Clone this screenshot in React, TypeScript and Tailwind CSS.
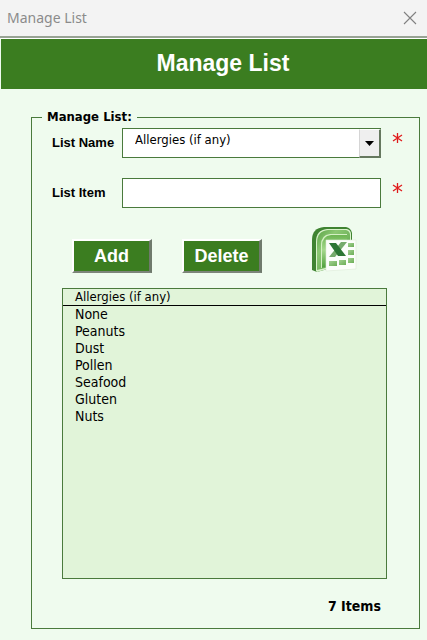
import React, { useState } from 'react';

const listNames = ['Allergies (if any)'];

const listItems = ['None', 'Peanuts', 'Dust', 'Pollen', 'Seafood', 'Gluten', 'Nuts'];

const buttonClass =
  "h-[34px] w-20 border-t-2 border-l-2 border-r-[3px] border-b-2 border-t-white border-l-white border-r-[#6f7a6c] border-b-[#7c8479] bg-[#3b7d20] font-['Liberation_Sans',sans-serif] text-[18px] leading-none font-bold text-white";

function ExcelIcon() {
  return (
    <svg viewBox="0 0 46 46" className="h-[46px] w-[46px]" aria-hidden="true">
      <defs>
        <linearGradient id="rim" x1="0" y1="0" x2="1" y2="1">
          <stop offset="0" stopColor="#5da548" />
          <stop offset="0.3" stopColor="#8cc873" />
          <stop offset="1" stopColor="#4b983a" />
        </linearGradient>
        <linearGradient id="inside" x1="0" y1="0" x2="0" y2="1">
          <stop offset="0" stopColor="#6db553" />
          <stop offset="0.45" stopColor="#a5d88c" />
          <stop offset="1" stopColor="#4e9f3a" />
        </linearGradient>
        <linearGradient id="cell" x1="0" y1="0" x2="1" y2="1">
          <stop offset="0" stopColor="#a3d192" />
          <stop offset="1" stopColor="#6cae56" />
        </linearGradient>
      </defs>
      <path d="M0 43V13Q0 1 12 0H34Q39 1 40 6V35L5 45Z" fill="#3f8331" />
      <path d="M4 44V15Q4 3 15 2H35Q39 3 39 7V35L5 45Z" fill="#d9f2cb" />
      <path d="M5 43V16Q5 4 16 3H34Q38 4 38 8V35Z" fill="url(#rim)" />
      <path d="M9 41V18Q9 8 18 7H35V34Z" fill="#d4f0c4" />
      <path d="M10 41V19Q10 9 19 8H35V34Z" fill="url(#inside)" />
      <path d="M14 13L44 13V42L14 44Z" fill="#fcfefb" stroke="#dcebd6" strokeWidth="0.6" />
      <path d="M29 15H35L23 30H17Z" fill="#76ab6d" />
      <path d="M17 16H24L34 29H26Z" fill="#2c7634" />
      <g fill="url(#cell)">
        <path d="M36 16H42V20H36Z" />
        <path d="M36 23H42V28H36Z" />
        <path d="M36 31H42V36H36Z" />
        <path d="M27 33H34V38H27Z" />
        <path d="M17 34H25V39H17Z" />
      </g>
    </svg>
  );
}

function Required() {
  return (
    <svg viewBox="0 0 11 12" className="mt-1 ml-[11px] h-3 w-[11px] self-start" role="img" aria-label="required">
      <path d="M5.5 1V11M1 3L10 9M10 3L1 9" stroke="#e01b1b" strokeWidth="1.3" fill="none" />
    </svg>
  );
}

export default function App() {
  const [listName, setListName] = useState(listNames[0]);
  const [listItem, setListItem] = useState('');

  return (
    <div className="flex min-h-screen flex-col border-b border-[#9aa398] bg-[#effbee] font-['DejaVu_Sans_Condensed','DejaVu_Sans',sans-serif] text-black">
      {/* Title bar */}
      <div className="flex h-[38px] items-center justify-between border-b-2 border-[#98a394] bg-[#f3f3f3] pr-[10px] pl-[7px]">
        <span className="font-['Noto_Sans',sans-serif] text-sm text-[#8b8b8b]">Manage List</span>
        <button type="button" aria-label="Close" className="flex h-6 w-3.5 items-center justify-center">
          <svg viewBox="0 0 14 14" className="h-3.5 w-3.5">
            <path d="M1 1L13 13M13 1L1 13" stroke="#808080" strokeWidth="1.1" />
          </svg>
        </button>
      </div>

      {/* Heading */}
      <header className="ml-px flex h-[51px] items-center justify-center border-t border-white bg-[#3b7d20] pb-0.5 pl-[18px]">
        <h1 className="font-['Liberation_Sans',sans-serif] text-[23px] font-bold text-white">Manage List</h1>
      </header>

      <main className="px-[7px] pt-[19px] pb-[11px] pl-[31px]">
        <fieldset className="min-w-0 border border-[#4a7a3c] pr-4 pl-5">
          <legend className="-ml-[10px] px-[5px] text-[13px] leading-[18px] font-bold">Manage List:</legend>

          <div className="mt-0.5 flex items-center">
            <label htmlFor="list-name" className="w-[70px] font-['Liberation_Sans',sans-serif] text-[13px] font-bold">
              List Name
            </label>
            <div className="relative flex-1">
              <select
                id="list-name"
                value={listName}
                onChange={(e) => setListName(e.target.value)}
                className="block h-[30px] w-full appearance-none rounded-none border border-[#4a7a3c] bg-white pb-1.5 pl-3 text-[13px] leading-5"
              >
                {listNames.map((name) => (
                  <option key={name}>{name}</option>
                ))}
              </select>
              <span className="pointer-events-none absolute top-px right-0 bottom-0 flex w-[22px] items-center justify-center border-t border-r-2 border-b-2 border-l border-t-white border-r-[#66785f] border-b-[#66785f] border-l-[#d5d5d5] bg-[#efefef]">
                <svg viewBox="0 0 9 5" className="h-[5px] w-[9px]">
                  <path d="M0 0H9L4.5 5Z" fill="#000" />
                </svg>
              </span>
            </div>
            <Required />
          </div>

          <div className="mt-5 flex items-center">
            <label htmlFor="list-item" className="w-[70px] font-['Liberation_Sans',sans-serif] text-[13px] font-bold">
              List Item
            </label>
            <input
              id="list-item"
              type="text"
              value={listItem}
              onChange={(e) => setListItem(e.target.value)}
              className="h-[30px] min-w-0 flex-1 border border-[#4a7a3c] bg-white px-3 text-[13px]"
            />
            <Required />
          </div>

          {/* Actions */}
          <div className="mt-[19px] flex items-end pl-5">
            <button type="button" className={buttonClass}>
              Add
            </button>
            <button type="button" className={buttonClass + ' ml-[30px]'}>
              Delete
            </button>
            <button type="button" aria-label="Export to Excel" className="ml-[50px]">
              <ExcelIcon />
            </button>
          </div>

          <div className="mt-[15px] mr-4 ml-[10px] min-h-[291px] border border-[#4a7a3c] bg-[#e1f4d9]">
            <table className="w-full border-collapse text-left leading-4">
              <thead>
                <tr className="border-b border-black text-[13px]">
                  <th className="p-0 pl-3 font-normal">{listName}</th>
                </tr>
              </thead>
              <tbody className="text-sm leading-[17px]">
                {listItems.map((item) => (
                  <tr key={item}>
                    <td className="p-0 pl-3">{item}</td>
                  </tr>
                ))}
              </tbody>
            </table>
          </div>

          <p className="mt-[17px] mr-[22px] mb-3 text-right text-sm font-bold">{listItems.length} Items</p>
        </fieldset>
      </main>
    </div>
  );
}
